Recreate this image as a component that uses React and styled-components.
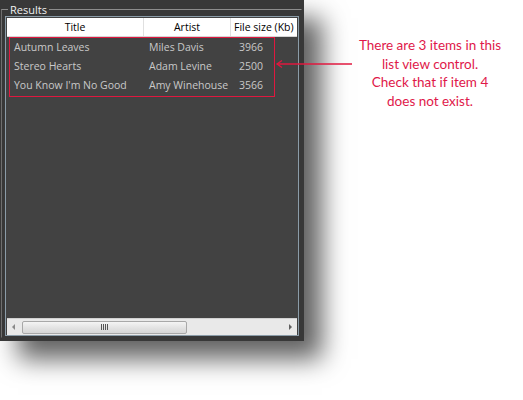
import React from "react";
import styled, { createGlobalStyle } from "styled-components";

const Global = createGlobalStyle`
  html, body { margin: 0; padding: 0; background: #ffffff; }
  body { width: 523px; height: 400px; overflow: hidden; position: relative; }
`;

const Page = styled.div`
  position: relative;
  width: 523px;
  height: 400px;
`;

const Panel = styled.div`
  width: 304px;
  height: 341px;
  box-sizing: border-box;
  background: #383838;
  padding: 3px 2px 3px 1px;
  box-shadow: 18px 18px 24px rgba(0, 0, 0, 0.62);
  display: flex;
`;

const Group = styled.fieldset`
  flex: 1;
  margin: 0;
  padding: 0 2px 1px 3px;
  border: 1px solid #8c8c8c;
  border-bottom-color: transparent;
  border-right-color: transparent;
  border-left-color: #6e6e6e;
  display: flex;
  min-width: 0;
`;

const Legend = styled.legend`
  font-family: "Open Sans", "Liberation Sans", sans-serif;
  font-size: 11px;
  line-height: 13px;
  color: #f0f0f0;
  padding: 0 2px;
  margin-left: 3px;
`;

const List = styled.div`
  position: relative;
  flex: 1;
  border: 1px solid #8b9ca8;
  background: #424242;
  display: flex;
  flex-direction: column;
  font-family: "Open Sans", "Liberation Sans", sans-serif;
  font-size: 10.5px;
`;

const Header = styled.div`
  display: grid;
  grid-template-columns: 137px 87px 1fr;
  height: 18px;
  background: #ffffff;
  border-bottom: 1px solid #d5d5d5;
  margin: 1px 1px 0 1px;
`;

const HeadCell = styled.div`
  color: #000;
  display: flex;
  align-items: center;
  justify-content: center;
  border-right: 1px solid #e0e0e0;
  white-space: nowrap;
  overflow: hidden;
  line-height: 18px;
  &:last-child { border-right: none; justify-content: flex-start; padding-left: 3px; }
`;

const Rows = styled.div`
  flex: 1;
`;

const Row = styled.div`
  display: grid;
  grid-template-columns: 137px 87px 1fr;
  height: 19px;
  align-items: center;
  color: #c9c9c9;
  margin-left: 1px;
`;

const Cell = styled.div`
  padding-left: ${(p) => p.$pl || 7}px;
  white-space: nowrap;
  overflow: hidden;
`;

const Highlight = styled.div`
  position: absolute;
  left: 3px;
  top: 20px;
  width: 266px;
  height: 60px;
  border: 1px solid #e0183f;
  box-sizing: border-box;
  pointer-events: none;
`;

const ScrollBar = styled.div`
  height: 16px;
  margin: 0 1px 0 1px;
  background: #e9e9e9;
  border-top: 1px solid #d0d0d0;
  display: flex;
  align-items: center;
`;

const ArrowBtn = styled.div`
  width: 14px;
  height: 16px;
  display: flex;
  align-items: center;
  justify-content: center;
`;

const Track = styled.div`
  flex: 1;
  height: 100%;
  display: flex;
  align-items: center;
`;

const Thumb = styled.div`
  width: 165px;
  height: 13px;
  margin-left: 1px;
  box-sizing: border-box;
  border: 1px solid #a8a8a8;
  border-radius: 2px;
  background: linear-gradient(#f4f4f4, #e2e2e2 55%, #d6d6d6);
  display: flex;
  align-items: center;
  justify-content: center;
`;

const Grip = styled.div`
  display: flex;
  gap: 1px;
  & > span { width: 1px; height: 6px; background: #555; }
`;

const Note = styled.div`
  position: absolute;
  left: 340px;
  top: 36px;
  width: 180px;
  text-align: center;
  color: #e0184a;
  font-family: "Comic Sans MS", "Lato", "DejaVu Sans", sans-serif;
  font-size: 13.5px;
  line-height: 18.5px;
`;

const Arrow = styled.svg`
  position: absolute;
  left: 274px;
  top: 58px;
`;

const data = [
  ["Autumn Leaves", "Miles Davis", "3966"],
  ["Stereo Hearts", "Adam Levine", "2500"],
  ["You Know I'm No Good", "Amy Winehouse", "3566"],
];

export default function App() {
  return (
    <Page>
      <Global />
      <Panel>
        <Group>
          <Legend>Results</Legend>
          <List>
            <Header>
              <HeadCell>Title</HeadCell>
              <HeadCell>Artist</HeadCell>
              <HeadCell>File size (Kb)</HeadCell>
            </Header>
            <Rows>
              {data.map((r) => (
                <Row key={r[0]}>
                  <Cell>{r[0]}</Cell>
                  <Cell $pl={5}>{r[1]}</Cell>
                  <Cell $pl={8}>{r[2]}</Cell>
                </Row>
              ))}
            </Rows>
            <Highlight />
            <ScrollBar>
              <ArrowBtn>
                <svg width="6" height="8" viewBox="0 0 6 8">
                  <path d="M4 1 L1 4 L4 7 Z" fill="#8a8a8a" />
                </svg>
              </ArrowBtn>
              <Track>
                <Thumb>
                  <Grip>
                    <span /><span /><span /><span />
                  </Grip>
                </Thumb>
              </Track>
              <ArrowBtn>
                <svg width="6" height="8" viewBox="0 0 6 8">
                  <path d="M2 1 L5 4 L2 7 Z" fill="#606060" />
                </svg>
              </ArrowBtn>
            </ScrollBar>
          </List>
        </Group>
      </Panel>
      <Arrow width="80" height="12" viewBox="0 0 80 12">
        <path d="M3 6 H78" stroke="#e0183f" strokeWidth="1.3" />
        <path d="M8 2.5 L3 6 L8 9.5" stroke="#e0183f" strokeWidth="1.3" fill="none" />
      </Arrow>
      <Note>
        There are 3 items in this<br />
        list view control.<br />
        Check that if item 4<br />
        does not exist.
      </Note>
    </Page>
  );
}
